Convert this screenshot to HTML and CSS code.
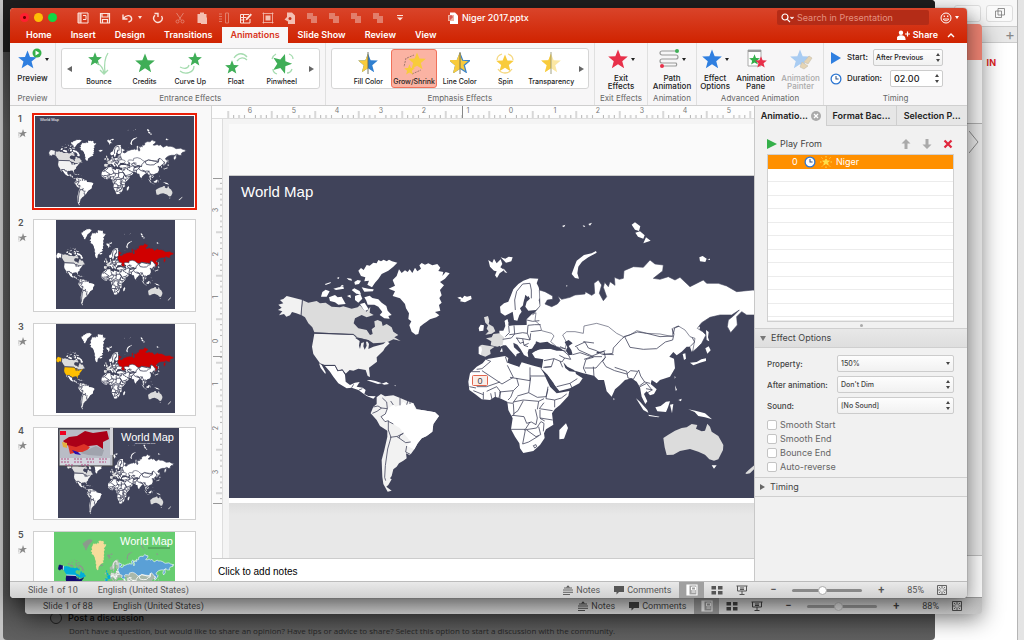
FILE: index.html
```html
<!DOCTYPE html>
<html lang="en">
<head>
<meta charset="utf-8">
<title>Niger 2017.pptx</title>
<link rel="stylesheet" href="styles.css">
</head>
<body>
<svg class="defs" aria-hidden="true">
  <defs>
    <symbol id="star" viewBox="0 0 24 24"><path d="M12 .5l3.200 8.200 8.600.4-6.700 5.500 2.300 8.500L12 18.300 4.600 23.100l2.300-8.500L.2 9.100l8.600-.4z"/></symbol>
    <symbol id="halfstar" viewBox="0 0 24 24"><path d="M12 .5v17.800L4.600 23.100l2.300-8.500L.2 9.100l8.600-.4z"/></symbol>
    <symbol id="ministar" viewBox="0 0 9 9"><path d="M5 0l1 3h3L6.500 4.800l.9 3.200L4.800 6.200 1.800 8.500l1-3.300L1 4l3-.6z"/><path d="M0 4h2M0 6h1.500M.5 8h1" stroke="#999" fill="none" stroke-width=".7"/></symbol>
    <symbol id="clock" viewBox="0 0 14 14"><circle cx="7" cy="7" r="5.700" fill="#fff" stroke="#2d76d2" stroke-width="1.500"/><path d="M7 3.500V7h3" fill="none" stroke="#2a4f85" stroke-width="1.200"/></symbol>
    <symbol id="notes-i" viewBox="0 0 10 10"><path d="M0 5h10M0 7.300h10M0 9.500h7M1 3h8" stroke="currentColor" stroke-width=".9"/><path d="M3 2.500L5 .3l2 2.200z" fill="currentColor"/></symbol>
    <symbol id="comment-i" viewBox="0 0 10 10"><path d="M0 1h10v6H5L2.500 9.600V7H0z" fill="currentColor"/></symbol>
    <symbol id="normal-i" viewBox="0 0 12 12"><path d="M1 1h10v10H1z" fill="none" stroke="currentColor" stroke-width="1.200"/><path d="M1 1h2.500v10H1z" fill="currentColor"/><path d="M5.500 3h4v3h-4zM5.500 8h4" fill="none" stroke="currentColor"/></symbol>
    <symbol id="grid-i" viewBox="0 0 12 12"><path d="M.5 2h4.500v3.500H.5zM7 2h4.500v3.500H7zM.5 7h4.500v3.500H.5zM7 7h4.500v3.500H7z" fill="currentColor"/></symbol>
    <symbol id="show-i" viewBox="0 0 12 12"><path d="M.5 2h11M1.500 2v5h9V2M6 7v3M3.500 10.500h5M4 4h4M4 5.500h4" fill="none" stroke="currentColor"/></symbol>
    <symbol id="fit-i" viewBox="0 0 12 12"><path d="M1.500 1.500h9v9h-9z" fill="none" stroke="currentColor" stroke-width=".9"/><path d="M6 2v2.500M6 7.500V10M2 6h2.500M7.500 6H10M3 3l1.500 1.500M9 3L7.500 4.500M3 9l1.500-1.500M9 9L7.500 7.500" fill="none" stroke="currentColor" stroke-width=".8"/></symbol>
    <symbol id="copy-i" viewBox="0 0 12 12"><path d="M1 1h6v3h4v7H5V7H1z" fill="currentColor"/></symbol>

    <g id="map">
      <g transform="translate(225 200) scale(.33333)">
        <g class="c-arctic">
          <path class="c-gl" d="M491 266L510 257 503 240 515 228 522 208 530 219 540 211 548 216 554 208 562 219 570 203 577 214 588 206 583 196 590 189 600 194 610 190 622 196 637 192 646 203 640 213 655 216 652 228 662 216 674 220 660 236 645 246 657 256 645 270 650 286 643 294 650 308 642 315 646 332 630 336 643 346 634 352 615 358 605 365 595 372 585 380 580 402 572 404 560 395 553 376 559 364 550 357 552 340 543 325 540 312 525 295 503 288 510 274Z"/>
          <path class="c-isl" d="M400 212L408 204 416 210 425 195 434 197 445 188 455 190 460 180 468 184 476 179 485 184 492 179 501 184 517 188 505 200 490 212 470 222 460 237 450 248 441 262 427 254 432 242 418 244 421 232 408 228Z"/>
        </g>
        <path class="c-isl" d="M288 290L292 276 302 269 314 274 305 290ZM312 292L330 285 338 292 350 290 362 312 340 314 330 307 315 303ZM418 292L434 287 442 294 460 298 470 308 484 318 488 332 500 345 490 348 494 356 478 355 464 345 472 336 460 320 448 314 428 314 424 302ZM380 270l8-5 16 8 4 10-14-2zM410 262l20 4 16 2-2 6-26 1zM390 288l16-6 6 14-12 12-10-8zM300 252l18-6-2 4-14 5zM325 266l16-4 14-2 2 6-24 4zM335 234l8-3-2 6zM365 234l14 2 2 6-10-2zM388 246l10-6 10 2-6 10-12 2zM366 288l10-4 2 10zM405 312l14-4 12 20-12 6zM345 262l6-8 6 4z"/>
        <path class="c-isl" d="M697 293L706 290 712 295 718 287 726 290 738 287 740 297 720 307 705 304 708 299Z"/>
        <path class="c-ak" d="M165 300L175 297 185 288 200 292 232 300 228 345 214 340 201 336 195 346 184 350 177 342 162 346 172 334 159 330 170 323 160 314 175 310Z"/>
        <path class="c-ca" d="M233 301L250 308 275 303 285 310 302 308 320 320 345 322 355 319 380 326 398 322 405 316 415 328 425 335 436 320 434 338 446 345 425 352 410 345 390 355 386 370 400 385 425 390 435 405 443 402 440 388 450 380 448 364 458 360 470 365 473 378 485 372 500 382 505 395 520 405 508 412 527 423 505 418 490 425 470 428 445 430 430 420 395 412 385 403 268 397 262 382 250 370 240 352 229 345Z"/>
        <path class="c-us" d="M268 401L385 405 398 417 425 420 432 432 430 447 445 440 475 432 485 423 494 430 480 443 475 452 455 472 456 485 432 503 435 531 428 528 422 510 400 506 385 512 374 510 362 521 352 508 340 512 330 495 300 495 285 490 265 462 261 440Z"/>
        <path class="c-land" d="M300 498L330 498 338 514 352 511 360 524 362 545 375 555 390 548 404 546 395 560 413 563 422 570 418 582 430 588 452 589 445 596 425 588 400 570 380 563 365 565 340 550 325 530 315 515ZM282 490l8 5 12 22-1 5-14-18zM425 541l12-1 14 3 20 7-12 2-18-6zM470 551l14-5 8 6-14 2zM508 556l6 1-4 2z"/>
        <path class="c-sa" d="M455 592L468 582 480 589 505 586 520 592 545 602 565 610 575 628 590 630 630 637 642 648 625 672 622 695 605 708 590 715 578 730 568 748 555 766 543 760 545 775 535 782 522 790 515 800 505 808 500 828 495 835 500 838 490 855 484 860 500 872 488 875 475 852 472 830 470 780 478 750 487 710 487 692 465 678 455 660 437 640 445 620 455 612Z"/>
        <path class="c-land" d="M487 626L505 615 512 620 525 616 535 605 545 614 565 610 570 628 590 630 630 637 642 648 625 672 622 695 605 708 590 715 578 730 568 748 545 738 557 725 545 710 535 700 525 685 505 672 490 662 480 665 468 650 480 642Z"/>
        <path class="c-sea" d="M390 413l22 3 15 4 8 4-12 1 2 12-6 12-4-10 2-12-8 2-4 18-3-10 2-14z"/>
        <path class="c-line" d="M232 300l-4 45M268 399l117 4 10 8M300 496l20 0 10 0 8 16 14-2 10 14M487 626l-18-2-10-6-14 3M487 626l-2-20-13-12M505 615l-8-12M525 616l0-22M545 614l4-12M555 612v-8M442 640l14-6 14-10M487 626l-6 16-13 8 12 15 10-3v28l8 22-10 35-7 50-2 35 3 10M495 712l22-3 18-9M505 672l-15-8M535 700l-10 6-3 8 20 14 15-2M545 738l-3 18 16 8M522 714l-6-4M380 563l6-10M402 570l10-4"/>
      </g>
      <g transform="translate(460 200) scale(.33333)">
        <path class="c-land" d="M120 320L132 310 145 305 152 288 160 268 175 252 190 242 210 235 235 236 230 250 236 262 242 290 236 300 241 318 228 330 205 332 196 320 200 305 210 296 205 288 192 300 190 315 180 325 185 335 178 345 172 362 162 360 158 335 150 340 135 347 122 338Z"/>
        <path class="c-land" d="M118 392L130 392 136 378 134 362 142 358 146 378 162 376 200 375 200 358 216 342 240 330 420 360 600 380 720 380 710 440 695 455 690 440 680 440 665 455 650 466 640 456 628 470 642 476 645 505 630 530 600 540 590 550 575 540 572 552 590 568 582 582 570 586 560 574 552 582 562 604 556 612 545 590 540 562 530 545 515 535 495 540 480 555 465 568 455 590 440 574 432 540 415 540 402 527 370 520 345 512 348 522 368 535 358 550 330 565 298 573 278 548 262 524 245 507 250 478 225 474 216 460 235 448 270 446 290 452 312 452 295 440 272 432 262 425 240 428 228 424 224 445 206 448 203 458 205 472 192 465 182 448 172 434 160 428 162 442 180 458 170 462 168 470 150 450 138 436 130 436 120 440Z"/>
        <path class="c-ru" d="M238 270L255 275 278 288 278 298 262 300 255 312 275 320 292 312 300 302 294 288 305 298 330 292 345 285 375 282 376 275 395 286 404 280 402 250 415 240 425 255 418 280 430 302 440 290 430 262 434 247 445 260 450 245 465 256 463 232 478 238 490 235 492 212 520 200 550 202 570 180 585 192 610 195 608 213 580 235 600 238 625 230 645 240 660 232 690 260 730 240 740 250 775 250 800 258 830 275 880 270 900 282 945 292 925 298 930 308 900 312 885 330 890 345 860 345 845 335 830 350 832 375 812 398 802 380 805 360 820 348 838 330 815 345 780 345 750 352 725 368 712 385 728 395 738 405 725 430 710 445 698 455 705 415 690 410 675 390 655 378 638 385 638 410 600 402 560 400 530 392 510 405 490 410 470 400 445 380 410 370 372 378 370 400 345 395 320 395 308 405 320 428 315 447 290 440 272 425 282 408 275 400 245 392 240 375 225 362 228 338 218 344 240 318Z"/>
        <path class="c-isl" d="M335 222L343 200 350 182 372 165 395 160 408 153 410 158 385 172 366 185 355 200 352 220 357 236 345 234ZM85 180l12 8 5-12 8 14 12-12 5 14-6 10 12 8-14 10-8 14-6-8 5-12-8-2-12-12zM122 172l14 4 10-6 12 2-4 12-16 4zM130 205l12 14-8-2zM306 78l10-4-4 8zM318 86l4-6zM324 76l8 2zM350 72l6 4zM368 76l8 2-4 4zM385 72l11-4-6 9zM505 66l8 4zM515 74l10-7 16 12-4 14-12-4zM526 98l14-4 14 12-4 10-16-6zM550 130l8-18 14 10zM718 172l10-4 12 8-4 10-16-2zM742 178l8-2 0 4zM765 182l10 1zM735 202l8 1zM318 256l5 1-3 3z"/>
        <path class="c-ca" d="M72 352L84 348 88 362 86 372 100 380 106 394 95 401 76 404 86 394 80 386 84 376 76 368Z"/>
        <path class="c-ca" d="M78 415L95 412 100 402 118 400 132 412 128 435 112 440 92 436 94 424ZM58 438L66 434 104 440 90 450 92 462 76 470 60 464Z"/>
        <path class="c-land" d="M56 384l6-10 10 2-2 16-12 2zM56 440l8 0 2 10-4 14-6-2zM134 364l8-6 4 12-8 4zM120 455l6-12 2 12z"/>
        <path class="c-land" d="M68 490L78 478 100 474 135 468 145 474 142 488 170 498 178 500 185 487 215 496 243 503 250 515 258 535 270 560 290 580 328 573 325 588 300 615 285 627 276 640 280 674 258 688 252 700 254 714 240 735 220 753 190 759 180 745 178 730 165 710 153 688 158 655 145 630 142 605 120 595 105 590 90 600 65 598 45 582 28 570 25 545 30 520 50 500Z"/>
        <path class="c-land" d="M298 690L318 670 324 684 312 716 298 718ZM460 594l4 3-3 4zM528 595L540 605 562 630 565 638 550 630ZM586 622L602 618 618 605 630 604 624 622 618 636 592 634ZM565 644l34 6-4 2-28-4zM630 614l10-2-4 28zM685 628L706 632 735 640 756 658 735 652 715 648 704 636ZM645 556l6 14-4 2zM655 600l10-4-2 8zM634 636l3 10zM738 390l8 6-2 16 4 12-8-4zM736 445l10-6 6 12-10 10zM690 488l20-2 14-8 14-3 0 8-18 5-20 8zM668 462l8-2 2 16-6 4zM755 796l15 0-8 10zM644 528l3 4-3 4z"/>
        <path class="c-au" d="M610 714L625 704 645 692 665 684 680 682 695 672 712 675 708 686 725 694 735 692 742 671 750 680 755 695 775 708 790 735 789 750 775 778 762 782 748 778 735 764 715 755 690 747 660 753 640 764 620 765 614 742ZM856 820l10-10 14-12 14-12 6 2-16 18-14 14-10 2z"/>
        <path class="c-sea" d="M216 446L225 432 240 430 256 434 264 428 272 434 290 442 296 450 270 446 240 448 228 452ZM314 426L326 420 338 430 326 438 334 450 338 464 326 466 318 452 322 442ZM310 487L322 500 342 510 348 516 328 514 316 504ZM240 503L262 524 280 548 294 576 284 568 268 544 256 526ZM196 284l6 6-6 20-8 12zM410 455h12l-3 4h-9z"/>
        <path class="c-line" d="M210 250l-22 2-18 22-6 26 2 30M210 250l4 20 0 25M146 378l2 20-12 12M162 376l2 26-16 2M164 402l24-4 14 2 2-24M202 400l8 20-22-4-20-2M204 376l20-2 18 0M200 360l18 4 20-2M212 395l32-4M210 420l2-20M164 402l-10 12-26 4M170 414l10 16 12-4M188 416l4 20 14-6M192 436l12 4M310 452l16 14 6 12-18-4-16-8M314 474l-8 12-24-10-30 6M282 476l-8 24-20 2M274 500l-24 2M300 484l8 18M290 560l40-10 22-14M330 550l6 14M338 464l22-6 40 14-22 6-8 26 8 16M372 478l24-8 30 0M345 440l30-14 10 18 24 8 16 10 36 2M350 440l6 10 40 18M370 425l32 4M396 468l36-14 4 18-28 32-34 0M410 460l26-8M460 444l-2 16-30 4M460 444l26-28 8-6M494 410l16 32 40 6 40-2 26-20 22-6 4-18-6-16M494 410l38-14 28 4 40 10 38-2M640 402l4-18 12-5M436 472l-8 12 10 16 26 12 36 10 12-10 20 2M464 502l36 12M500 514l4 20 16 4 16-28 6 18 12 18-16 12M554 546l16 4M540 560l20-10 16 20-16 10M558 566l20 4M690 440l14-14-8-14M300 440l20 8M300 450l20 4M402 530l-2-30"/>
        <path class="c-line" d="M78 478l14 6-26 22-16 2M60 515h-25M66 512l60 40 34-20-18-36M142 488l-6-18M150 532l60 10 0-40M178 500l-8-6M210 528h48M212 532l-6 46-34 10M170 534l6 22-16 16-42 4M50 560l30 0 40-14M80 574l30-14 12 16-6 20M40 572l30 12M70 576v22M92 580l4 18M105 576l2 20M28 560l20 4M120 576l0 18M160 572l-8 20-8 8M172 590l-14 20-16-2M160 606l30-6 46 4 16-8M206 578l26 14 26-2 6-22M264 560l-6 36 26 4 20-6 16-12M284 600l0 22M236 604l-4 24M252 608l-14 18 40 6M160 610l2 34-10 6M190 602l-16 30-14 10M158 646l34 4 8 20 14-4 14 8 4-20-6-26M240 630l0 24 38 6M152 688h44l14-22M196 690l-8 42 18-6 30-18M192 690l38-6 12-18M200 690l28 20M228 710l14-6-6-24M242 664l10 6-2 24M240 655l14 8M220 737l8-3 2 6-6 4z"/>
      </g>
    </g>
  </defs>
</svg>

<div class="desktop">
  <div class="browser" aria-hidden="true">
    <div class="browser-bar"><span class="browser-btn"></span><span class="browser-btn"><svg width="10" height="10" viewBox="0 0 10 10"><path d="M3 .5h6.500V7H3zM.5 3h6v6.500h-6z" fill="#f8f8f8" stroke="#777" stroke-width=".8"/></svg></span></div>
    <div class="browser-tabs"><span>+</span></div>
    <div class="browser-page"><b>IN</b></div>
  </div>
  <div class="forum">
    <div class="forum-head"></div>
    <div class="forum-foot">
      <label class="forum-option"><input type="radio" name="kind"> Post a discussion</label>
      <p>Don't have a question, but would like to share an opinion? Have tips or advice to share? Select this option to start a discussion with the community.</p>
    </div>
  </div>

  <section class="window window-back" aria-label="Background presentation">
    <div class="back-title"></div>
    <div class="back-ribbon"></div>
    <div class="back-body"><svg width="10" height="24" viewBox="0 0 10 24"><path d="M0 1l9 11-9 11" fill="none" stroke="#888"/></svg></div>
    <div class="back-notes"></div>
    <footer class="status">
      <span>Slide 1 of 88</span><span class="status-lang">English (United States)</span>
      <button class="st-btn"><svg class="i10"><use href="#notes-i"/></svg>Notes</button>
      <button class="st-btn"><svg class="i10"><use href="#comment-i"/></svg>Comments</button>
      <button class="st-view on" aria-label="Normal"><svg class="i12"><use href="#normal-i"/></svg></button>
      <button class="st-view" aria-label="Sorter"><svg class="i12"><use href="#grid-i"/></svg></button>
      <button class="st-view" aria-label="Slide show"><svg class="i12"><use href="#show-i"/></svg></button>
      <button class="st-zoom">−</button><input type="range" min="0" max="100" value="43" aria-label="Zoom"><button class="st-zoom">+</button>
      <span class="st-pct">88%</span>
      <button class="st-fit" aria-label="Fit"><svg class="i12"><use href="#fit-i"/></svg></button>
    </footer>
  </section>

  <main class="window window-main">
    <header class="head">
      <div class="titlebar">
        <div class="lights"><i class="l-red"></i><i class="l-yel"></i><i class="l-grn"></i></div>
        <div class="tools">
          <button aria-label="Layout"><svg class="i12" viewBox="0 0 12 12"><path d="M1 1h10v10H1zM4 1v10M6 3.500h3v4H6" fill="none" stroke="currentColor"/><path d="M1 1h3v10H1z" fill="currentColor" opacity=".6"/></svg></button>
          <button aria-label="Save"><svg class="i12" viewBox="0 0 12 12"><path d="M1.500 1.500h9v9.500h-9zM3 1.500V5h6V1.500M3.500 11V7.500h5V11" fill="none" stroke="currentColor" stroke-width="1.200"/></svg></button>
          <button class="undo" aria-label="Undo"><svg class="i12" viewBox="0 0 12 12"><path d="M2 2.500v4.500h4.500M2.300 6.700C5 3 9.500 2.500 10.500 6c.5 2-1 3.500-3 4" fill="none" stroke="currentColor" stroke-width="1.400"/></svg><i class="caret"></i></button>
          <button aria-label="Redo"><svg class="i12" viewBox="0 0 12 12"><path d="M3 3.200A4.200 4.200 0 1 0 9.500 4M2.500 1.500h3.500v3.500" fill="none" stroke="currentColor" stroke-width="1.400"/></svg></button>
          <button class="dim" aria-label="Cut"><svg class="i12" viewBox="0 0 12 12"><path d="M2.500 1l5 7.500M9.500 1l-5 7.500" stroke="currentColor"/><g fill="none" stroke="currentColor"><circle cx="3.500" cy="9.500" r="1.500"/><circle cx="8.500" cy="9.500" r="1.500"/></g></svg></button>
          <button class="soft" aria-label="Paste"><svg class="i12" viewBox="0 0 12 12"><path d="M1.500 2h2.500V.5h4V2h2.500v3L11 6v6H5v-1H1.500z" fill="currentColor"/></svg></button>
          <button class="dim" aria-label="List"><svg class="i12" viewBox="0 0 12 12"><path d="M1 2h3M1 4.500h3M1 7h3M1 9.500h3" stroke="currentColor"/><path d="M7.500 1h3v10h-3z" fill="none" stroke="currentColor"/></svg></button>
          <button aria-label="Format"><svg class="i12" viewBox="0 0 12 12"><path d="M.5 2.500h8.500M.5 2.500V11h9.500V7M.5 5.500h6M.5 8h4M3.500 2.500V11" fill="none" stroke="currentColor"/><path d="M5.500 8.500l.7-2L10.500 1.500 12 2.700 7.500 7.800z" fill="currentColor"/></svg></button>
          <button class="soft" aria-label="Select"><svg class="i12" viewBox="0 0 12 12"><path d="M.5 1.500h11M.5 10.500h11M1.500 .5v11M10.500 .5v11" fill="none" stroke="currentColor" stroke-width=".8"/><path d="M3.500 3.500h5v5h-5z" fill="currentColor"/></svg></button>
          <button class="soft" aria-label="Insert file"><svg class="i12" viewBox="0 0 12 12"><path d="M3 .5h5L11 3.500V12H4V9.500L.5 7.500 3 5z" fill="currentColor"/><circle cx="6" cy="6.500" r="1.500" fill="#c73018"/></svg></button>
          <button class="dim" aria-label="Crop"><svg class="i12"><use href="#copy-i"/></svg></button>
          <button class="dim" aria-label="Bring forward"><svg class="i12"><use href="#copy-i"/></svg></button>
          <button class="dim" aria-label="Group"><svg class="i12"><use href="#copy-i"/></svg></button>
          <button class="dim" aria-label="Ungroup"><svg class="i12"><use href="#copy-i"/></svg></button>
          <button aria-label="Customize toolbar"><svg class="i12" viewBox="0 0 12 12"><path d="M3 3.500h6" stroke="currentColor"/><path d="M3 5.500h6L6 8.500z" fill="currentColor"/></svg></button>
        </div>
        <h1 class="doc"><svg width="10" height="12" viewBox="0 0 10 12"><path d="M2 .5h5l3 3V12H2z" fill="#fff"/><path d="M0 3h6v6H0z" fill="#f0b0a0"/><path d="M2 8V4h2v2H2" fill="none" stroke="#c33" stroke-width=".9"/></svg>Niger 2017.pptx</h1>
        <div class="title-right">
          <label class="search"><svg width="14" height="10" viewBox="0 0 14 10"><circle cx="4" cy="4" r="3" fill="none" stroke="currentColor" stroke-width="1.200"/><path d="M6.300 6.300L9 9M9.500 4l1.500 1.500L12.500 4" fill="none" stroke="currentColor" stroke-width="1.200"/></svg><input type="search" placeholder="Search in Presentation" aria-label="Search in Presentation"></label>
          <button class="smile" aria-label="Feedback"><svg class="i12" viewBox="0 0 12 12"><circle cx="6" cy="6" r="5" fill="none" stroke="currentColor"/><path d="M3.200 7c1 2.300 4.600 2.300 5.600 0z" fill="none" stroke="currentColor" stroke-width=".9"/><path d="M4.300 3.500v1.500M7.700 3.500v1.500" stroke="currentColor" stroke-width="1.200"/></svg><i class="caret"></i></button>
        </div>
      </div>
      <nav class="tabs">
        <a href="#">Home</a><a href="#">Insert</a><a href="#">Design</a><a href="#">Transitions</a><a href="#" class="on">Animations</a><a href="#">Slide Show</a><a href="#">Review</a><a href="#">View</a>
        <button class="share"><svg width="13" height="10" viewBox="0 0 13 10"><circle cx="4" cy="2.700" r="2.200" fill="currentColor"/><path d="M0 9.500c0-5 8-5 8 0zM8 4h5M10.500 1.500v5" fill="currentColor" stroke="currentColor" stroke-width="1.200" /></svg>Share</button>
        <button class="fold" aria-label="Collapse ribbon"><svg width="8" height="6" viewBox="0 0 8 6"><path d="M1 5l3-3 3 3" fill="none" stroke="currentColor" stroke-width="1.400"/></svg></button>
      </nav>
    </header>

    <div class="ribbon">
      <section class="grp g-preview">
        <div class="grp-body"><button class="big"><span class="ic"><svg width="28" height="22" viewBox="0 0 28 22"><use href="#star" y="2" width="19" height="19" x="1" fill="#2f7fe0"/><circle cx="20" cy="5" r="4.500" fill="#34b04a"/><path d="M18.500 2.500v5l4-2.500z" fill="#fff"/></svg><i class="caret"></i></span>Preview</button></div>
        <h2>Preview</h2>
      </section>
      <section class="grp g-gallery">
        <div class="gallery">
          <button class="arr" aria-label="Previous"><i class="tri-l"></i></button>
          <button class="fx"><svg width="26" height="24" viewBox="0 0 26 24" fill="#3fae57"><use href="#star" x="2" y="0" width="14" height="14"/><path d="M11 11c4 2 6 5 7 10M22 1c-4 6-4 12-3 20M14 18l4 4 4-4" fill="none" stroke="#a6dcb0" stroke-width="1.300"/></svg>Bounce</button>
          <button class="fx"><svg width="26" height="24" viewBox="0 0 26 24" fill="#3fae57"><use href="#star" x="3" y="1" width="20" height="20"/></svg>Credits</button>
          <button class="fx"><svg width="26" height="24" viewBox="0 0 26 24" fill="#3fae57"><use href="#star" x="11" y="0" width="14" height="14"/><path d="M17 14c0 7-9 9-14 5M3 15c4 2 8 2 9-2" fill="none" stroke="#a6dcb0" stroke-width="1.300"/></svg>Curve Up</button>
          <button class="fx"><svg width="26" height="24" viewBox="0 0 26 24" fill="#3fae57"><use href="#star" x="2" y="8" width="14" height="14"/><path d="M11 6c4-6 10-5 13-1M14 9c3-4 7-4 10-1" fill="none" stroke="#a6dcb0" stroke-width="1.300"/></svg>Float</button>
          <button class="fx"><svg width="26" height="24" viewBox="0 0 26 24" fill="#3fae57"><use href="#star" x="3" y="1" width="20" height="20" transform="rotate(18 13 11)"/><path d="M3 7c1-3 2-4 4-5M20 2c3 1 4 3 4 5M23 17c-1 3-3 4-5 4M8 22c-3-1-4-3-4-5" fill="none" stroke="#a6dcb0" stroke-width="1.300"/></svg>Pinwheel</button>
          <button class="arr" aria-label="Next"><i class="tri-r"></i></button>
        </div>
        <h2>Entrance Effects</h2>
      </section>
      <section class="grp g-gallery">
        <div class="gallery emph">
          <button class="fx"><svg width="26" height="24" viewBox="0 0 26 24"><use href="#star" x="3" y="1" width="20" height="20" fill="#2f7fd0"/><use href="#halfstar" x="3" y="1" width="20" height="20" fill="#f8cb3c"/><path d="M13 0v22" stroke="#665" stroke-width=".9"/></svg>Fill Color</button>
          <button class="fx on"><svg width="26" height="24" viewBox="0 0 26 24" fill="#f8cb3c"><path d="M5 6L3 15M11 22l9-4M6 6l7-3" stroke="#8d6a60" stroke-dasharray="2 1" stroke-width=".8"/><use href="#star" x="7" y="0" width="18" height="18"/><use href="#star" x="3" y="12" width="11" height="11"/></svg>Grow/Shrink</button>
          <button class="fx"><svg width="26" height="24" viewBox="0 0 26 24" fill="#f8cb3c"><use href="#star" x="3" y="1" width="20" height="20" stroke="#3d85c8" stroke-width="1.500"/><use href="#halfstar" x="3" y="1" width="20" height="20" stroke="#f8cb3c" stroke-width="1.500"/><path d="M13 0v22" stroke="#665" stroke-width=".9"/></svg>Line Color</button>
          <button class="fx"><svg width="26" height="24" viewBox="0 0 26 24" fill="#f8cb3c"><use href="#star" x="4" y="2" width="18" height="18"/><path d="M5 8c0-3 2-5 5-6M16 2c3 1 5 3 5 6M6 17c2 3 4 4 7 4s5-1 7-4" fill="none" stroke="#f5d880" stroke-width="1.300"/></svg>Spin</button>
          <button class="fx"><svg width="26" height="24" viewBox="0 0 26 24"><use href="#star" x="3" y="1" width="20" height="20" fill="#fbe7a2"/><use href="#halfstar" x="3" y="1" width="20" height="20" fill="#f8cb3c"/><path d="M13 0v22" stroke="#997" stroke-width=".9"/></svg>Transparency</button>
          <button class="arr" aria-label="Next"><i class="tri-r"></i></button>
        </div>
        <h2>Emphasis Effects</h2>
      </section>
      <section class="grp g-exit">
        <div class="grp-body"><button class="big"><span class="ic"><svg width="22" height="22" fill="#e8304a"><use href="#star" x="1" y="1" width="20" height="20"/></svg><i class="caret"></i></span>Exit<br>Effects</button></div>
        <h2>Exit Effects</h2>
      </section>
      <section class="grp g-path">
        <div class="grp-body"><button class="big"><span class="ic"><svg width="22" height="22" viewBox="0 0 22 22"><path d="M18 3H4a2 2 0 0 0 0 4h14a2 2 0 0 1 0 4H4a2 2 0 0 0 0 4h14a2 2 0 0 1 0 3H4" fill="none" stroke="#999" stroke-width="1.200"/><circle cx="19" cy="3" r="2" fill="#3fae57"/><circle cx="4" cy="18" r="2" fill="#e8304a"/></svg><i class="caret"></i></span>Path<br>Animation</button></div>
        <h2>Animation</h2>
      </section>
      <section class="grp g-adv">
        <div class="grp-body">
          <button class="big"><span class="ic"><svg width="22" height="22" fill="#2f7fe0"><use href="#star" x="1" y="1" width="20" height="20"/></svg><i class="caret"></i></span>Effect<br>Options</button>
          <button class="big"><span class="ic"><svg width="22" height="22" viewBox="0 0 22 22"><path d="M3 2h13v16H3z" fill="#fff" stroke="#aaa"/><path d="M3 2h13v2H3z" fill="#999"/><use href="#star" x="4" y="6" width="11" height="11" fill="#34b04a"/><use href="#star" x="10" y="8" width="12" height="12" fill="#e8304a"/></svg></span>Animation<br>Pane</button>
          <button class="big off" disabled><span class="ic"><svg width="24" height="22" viewBox="0 0 24 22"><use href="#star" x="1" y="1" width="20" height="20" fill="#a9ccf2"/><path d="M20 8l3 2-4 6-4-2zM13 14l6 4-4 3-4-2z" fill="#e5d4b4" stroke="#c8c0b0" stroke-width=".6"/></svg></span>Animation<br>Painter</button>
        </div>
        <h2>Advanced Animation</h2>
      </section>
      <section class="grp g-time">
        <div class="time-rows">
          <div><svg width="12" height="12" viewBox="0 0 12 12"><path d="M1 0l10 6-10 6z" fill="#2f7fe0"/></svg>
          <label for="start">Start:</label>
          <span class="sel"><select id="start"><option>After Previous</option></select><i class="updown"></i></span></div>
          <div><svg width="12" height="12"><use href="#clock"/></svg>
          <label for="dur">Duration:</label>
          <span class="spin"><input id="dur" type="text" value="02.00"><i class="updown"></i></span></div>
        </div>
        <h2>Timing</h2>
      </section>
    </div>

    <div class="work">
      <ol class="thumbs">
        <li class="thumb sel-thumb"><div class="no">1<svg><use href="#ministar"/></svg></div>
          <button aria-label="Slide 1"><svg class="pic" viewBox="0 0 161 91" preserveAspectRatio="none"><path class="bg" d="M0 0h161v91H0z"/><text x="5" y="5" font-size="4">World Map</text><svg width="161" height="91" viewBox="229 176 572 322" preserveAspectRatio="none"><use href="#map"/></svg></svg></button></li>
        <li class="thumb tall ru-red"><div class="no">2<svg><use href="#ministar"/></svg></div>
          <button aria-label="Slide 2"><svg class="pic" viewBox="0 0 161 91"><path class="bg" d="M22 0h119v89H22z"/><svg x="22" width="119" height="89" viewBox="278 173 498 333" preserveAspectRatio="none"><use href="#map"/></svg></svg></button></li>
        <li class="thumb tall ru-red us-gold"><div class="no">3<svg><use href="#ministar"/></svg></div>
          <button aria-label="Slide 3"><svg class="pic" viewBox="0 0 161 91"><path class="bg" d="M22 0h119v89H22z"/><svg x="22" width="119" height="89" viewBox="278 173 498 333" preserveAspectRatio="none"><use href="#map"/></svg></svg></button></li>
        <li class="thumb"><div class="no">4<svg><use href="#ministar"/></svg></div>
          <button aria-label="Slide 4"><svg class="pic" viewBox="0 0 161 91"><path class="bg" d="M24 0h121v90H24z"/><svg x="24" width="121" height="90" viewBox="238 158 558 350" preserveAspectRatio="none"><use href="#map"/></svg>
            <text x="87" y="13" font-size="11">World Map</text><text x="101" y="16" font-size="2">Soviet Union and allies</text>
            <path d="M25 1h54v37H25z" fill="#b9bcc6" stroke="#444"/><path d="M76 0h3v27h-3z" fill="#d5d5da"/><path d="M26 3h6v4h-6z" fill="#e02"/>
            <path d="M29 13l6-4 8-1 8-5 8 2 14-2 2 8-6 3v7l-6-4-8 1-10 4-8-2-4-3z" fill="#ab0018"/><path d="M34 17l8 2 8-3 6 3-4 5-8 0-8 2z" fill="#dd3328"/><path d="M28 14l5 1v5l-4-1z" fill="#e4b040"/><path d="M38 22l6 2 3 3-6-1z" fill="#2a10a8"/><path d="M46 25l16-7 8 4-2 6-14-1z" fill="#a0a3ad"/><path d="M26 30h50v7H26z" fill="#d4d6df"/>
            <path d="M27 31h8M40 31h8M52 31h9M65 31h8M27 34h9M40 34h8M53 34h7M65 34h7M31 37h8M47 37h8" stroke="#b05080" stroke-dasharray="2 1"/></svg></button></li>
        <li class="thumb tall green"><div class="no">5<svg><use href="#ministar"/></svg></div>
          <button aria-label="Slide 5"><svg class="pic" viewBox="0 0 161 91"><path class="bg" d="M20 0h121v90H20z"/><svg x="20" width="121" height="90" viewBox="262 181 517 318" preserveAspectRatio="none"><use href="#map"/></svg><text x="86" y="13" font-size="11">World Map</text><path d="M114 16h22" stroke="#4a8a52"/></svg></button></li>
      </ol>

      <section class="editor">
        <div class="ruler-h"><svg width="800" height="12" viewBox="222 106 800 12">
          <defs><pattern id="th" x="511" y="106" width="43.500" height="12" patternUnits="userSpaceOnUse"><path d="M5.400 9v3M10.900 9v3M16.300 9v3M21.750 5v7M27.200 9v3M32.600 9v3M38 9v3" stroke="#aaa" stroke-width=".9"/></pattern></defs>
          <path d="M226 106h796v12H226z" fill="url(#th)"/>
          <g text-anchor="middle"><text x="250" y="113">6</text><text x="294" y="113">5</text><text x="337" y="113">4</text><text x="381" y="113">3</text><text x="424" y="113">2</text><text x="468" y="113">1</text><text x="511" y="113">0</text><text x="555" y="113">1</text><text x="598" y="113">2</text><text x="642" y="113">3</text><text x="685" y="113">4</text><text x="729" y="113">5</text></g>
          <path d="M462.500 106v12" stroke="#888"/></svg></div>
        <div class="stage">
          <div class="ruler-v"><svg width="11" height="440" viewBox="212 118 11 440">
            <defs><pattern id="tv" x="212" y="340" width="11" height="43.500" patternUnits="userSpaceOnUse"><path d="M8 5.400h3M8 10.900h3M8 16.300h3M4 21.750h7M8 27.200h3M8 32.600h3M8 38h3" stroke="#aaa" stroke-width=".9"/></pattern></defs>
            <path d="M212 177h11v326h-11z" fill="url(#tv)"/><path d="M213 177.500h10M213 355.500h10M213 502.500h10" stroke="#999"/>
            <g text-anchor="middle"><text transform="translate(218 209) rotate(-90)">3</text><text transform="translate(218 253) rotate(-90)">2</text><text transform="translate(218 296) rotate(-90)">1</text><text transform="translate(218 340) rotate(-90)">0</text><text transform="translate(218 383) rotate(-90)">1</text><text transform="translate(218 427) rotate(-90)">2</text><text transform="translate(218 471) rotate(-90)">3</text></g></svg></div>
          <div class="canvas">
            <div class="prev-slide"></div>
            <svg class="slide" viewBox="229 176 572 322"><path class="bg" d="M229 176h572v322H229z"/><use href="#map"/><text x="241" y="197" font-size="15">World Map</text>
              <rect x="472.500" y="375.500" width="15" height="10" rx="1" fill="#fbeee8" stroke="#e2674f"/><text x="480" y="384" class="tag">0</text></svg>
            <div class="next-slide"></div>
          </div>
        </div>
        <div class="notes">Click to add notes</div>
      </section>

      <aside class="pane">
        <div class="pane-tabs"><button class="on">Animatio...<span class="x"><svg width="10" height="10" viewBox="0 0 10 10"><path d="M3 3l4 4M7 3L3 7" stroke="#fff" stroke-width="1.300"/></svg></span></button><button>Format Bac...</button><button>Selection P...</button></div>
        <div class="play">
          <button class="play-btn"><svg width="10" height="10" viewBox="0 0 10 10"><path d="M0 0l10 5-10 5z" fill="#34b04a"/></svg>Play From</button>
          <button aria-label="Move up"><svg width="10" height="10" viewBox="0 0 10 10"><path d="M5 0l4.500 4.500H6.500V10h-3V4.500H.5z" fill="#aaa"/></svg></button>
          <button aria-label="Move down"><svg width="10" height="10" viewBox="0 0 10 10"><path d="M5 10L.5 5.500h3V0h3v5.500h3z" fill="#aaa"/></svg></button>
          <button aria-label="Delete"><svg width="10" height="10" viewBox="0 0 10 10"><path d="M1.500 1.500l7 7M8.500 1.500l-7 7" stroke="#e0263c" stroke-width="2.200"/></svg></button>
        </div>
        <ul class="anims"><li class="on"><span>0</span><svg width="12" height="12"><use href="#clock"/></svg><svg width="12" height="12" viewBox="0 0 12 12"><path d="M6 3l1 2h2.300L7.500 6.500l.7 2.300L6 7.500 3.800 8.800l.7-2.300L2.700 5H5zM6 0v1.500M1.500 1.500l1 1M10.500 1.500l-1 1M0 6h1.500M10.500 6H12M2 10.500l1-1M10 10.500l-1-1M6 10.500V12" fill="#ffdf4c" stroke="#ffdf4c"/></svg>Niger</li><li></li><li></li><li></li><li></li><li></li><li></li><li></li><li></li><li></li><li></li><li></li><li></li></ul>
        <div class="grip"><i></i></div>
        <button class="sec open"><i class="tri-d"></i>Effect Options</button>
        <div class="opts">
          <label for="prop">Property:</label><span class="sel"><select id="prop"><option>150%</option></select><i class="caret"></i></span>
          <label for="after">After animation:</label><span class="sel"><select id="after"><option>Don't Dim</option></select><i class="updown"></i></span>
          <label for="sound">Sound:</label><span class="sel"><select id="sound"><option>[No Sound]</option></select><i class="updown"></i></span>
        </div>
        <div class="checks">
          <label><input type="checkbox">Smooth Start</label><label><input type="checkbox">Smooth End</label><label><input type="checkbox">Bounce End</label><label><input type="checkbox">Auto-reverse</label>
        </div>
        <button class="sec"><i class="tri-r"></i>Timing</button>
      </aside>
    </div>

    <footer class="status">
      <span>Slide 1 of 10</span><span class="status-lang">English (United States)</span>
      <button class="st-btn"><svg class="i10"><use href="#notes-i"/></svg>Notes</button>
      <button class="st-btn"><svg class="i10"><use href="#comment-i"/></svg>Comments</button>
      <button class="st-view on" aria-label="Normal"><svg class="i12"><use href="#normal-i"/></svg></button>
      <button class="st-view" aria-label="Sorter"><svg class="i12"><use href="#grid-i"/></svg></button>
      <button class="st-view" aria-label="Slide show"><svg class="i12"><use href="#show-i"/></svg></button>
      <button class="st-zoom">−</button><input type="range" min="0" max="100" value="42" aria-label="Zoom"><button class="st-zoom">+</button>
      <span class="st-pct">85%</span>
      <button class="st-fit" aria-label="Fit"><svg class="i12"><use href="#fit-i"/></svg></button>
    </footer>
  </main>
</div>
</body>
</html>
```
FILE: styles.css
```css
* { box-sizing: border-box; }
body { margin: 0; font: 9px/12px Inter, "Liberation Sans", sans-serif; color: #333; background: #ccc; }
h1, h2, p, ol, ul { margin: 0; padding: 0; font: inherit; list-style: none; }
button, input, select { font: inherit; color: inherit; background: none; border: 0; padding: 0; margin: 0; appearance: none; }
button { display: inline-flex; align-items: center; justify-content: center; }
a { color: inherit; text-decoration: none; }
svg { display: block; flex: none; }
.defs { position: absolute; width: 0; height: 0; }
.i10 { width: 10px; height: 10px; }
.i12 { width: 12px; height: 12px; }
.caret { border: 2px solid transparent; border-top: 3px solid currentColor; border-bottom: 0; flex: none; }
.tri-l { border: 3px solid transparent; border-right: 5px solid #666; border-left: 0; }
.tri-r { border: 3px solid transparent; border-left: 5px solid #666; border-right: 0; }
.tri-d { border: 3px solid transparent; border-top: 5px solid #777; border-bottom: 0; }
.updown { display: flex; flex-direction: column; gap: 3px; }
.updown::before, .updown::after { content: ""; border: 2px solid transparent; }
.updown::before { border-bottom: 3px solid #444; border-top: 0; }
.updown::after { border-top: 3px solid #444; border-bottom: 0; }

/* desktop */
.desktop { position: relative; height: 100vh; min-height: 560px; overflow: hidden; background: linear-gradient(90deg, #c4c4c4, #e4e4e4); }
.browser { position: absolute; inset: 0 6px 0 50%; background: #fff; border-right: 1px solid #b5b5b5; display: flex; flex-direction: column; }
.browser-bar { height: 27px; background: #f7f7f7; display: flex; justify-content: flex-end; align-items: center; gap: 5px; padding-right: 4px; border-bottom: 1px solid #ccc; }
.browser-btn { width: 27px; height: 17px; border: 1px solid #ddd; border-radius: 3px; display: flex; align-items: center; justify-content: center; background: #fafafa; }
.browser-tabs { height: 16px; background: #e8e8e8; text-align: right; font-size: 15px; line-height: 15px; color: #888; padding-right: 2px; border-bottom: 1px solid #ccc; }
.browser-page { display: flex; justify-content: flex-end; padding: 14px 21px 0 0; color: #e01f1f; }
.forum { position: absolute; inset: 0 89px 0 3px; border-radius: 0 4px 4px 4px; background: linear-gradient(#3a3a3a, #5c5c5c 20%, #505050 93%, #606060); display: flex; flex-direction: column; justify-content: space-between; overflow: hidden; }
.forum-head { height: 52px; background: #1e1e1e; }
.forum-foot { padding: 0 0 3px 47px; color: #262626; }
.forum-option { display: flex; align-items: center; gap: 6px; color: #111; font-size: 9px; font-weight: 600; }
.forum-option input { width: 12px; height: 12px; border: 1px solid #222; border-radius: 50%; }
.forum-foot p { padding-left: 19px; white-space: nowrap; font: 8px/13px "Open Sans", sans-serif; }

/* windows */
.window { position: absolute; display: flex; flex-direction: column; border-radius: 4px; overflow: hidden; }
.window-main { inset: 8px 57px 42px 10px; background: #f7f6f7; box-shadow: 0 6px 20px rgba(0, 0, 0, .5), 0 0 1px #333; }
.window-back { inset: 24px 42px 26px 25px; background: #d0d0d0; box-shadow: 0 6px 22px rgba(0, 0, 0, .45); }
.back-title { height: 36px; background: #e88070; }
.back-ribbon { height: 64px; background: #ececec; border-bottom: 1px solid #aaa; }
.back-body { flex: 1; display: flex; align-items: flex-start; justify-content: flex-end; padding: 6px 3px; background: #e4e4e4; }
.back-notes { height: 42px; background: #f8f8f8; border-top: 1px solid #bbb; }
.window-back .status { background: linear-gradient(#bbb, #c8c8c8); color: #3c3c3c; border-color: #999; }
.window-back .st-view.on { background: #8c8c8c; color: #ddd; }
.window-back .status input::-webkit-slider-thumb { background: #ccc; }

/* red header */
.head { color: #fff; background: linear-gradient(#d9442a, #d02300); height: 35px; flex: none; display: flex; flex-direction: column; }
.titlebar { height: 19px; display: flex; align-items: center; padding: 0 8px 0 10px; justify-content: space-between; }
.lights { display: flex; gap: 5px; width: 57px; }
.lights i { width: 9px; height: 9px; border-radius: 50%; }
.l-red { background: radial-gradient(circle, #700 1px, #ff1f30 2px); }
.l-yel { background: #ffbd05; }
.l-grn { background: #12d845; }
.tools { display: flex; gap: 10px; color: #fbe3dc; }
.tools .undo { gap: 5px; }
.soft { color: #f4bfb2; }
.dim { color: #e27e6b; }
.doc { flex: 1; display: flex; align-items: center; gap: 4px; padding-left: 42px; font-size: 9px; font-weight: 500; }
.title-right { display: flex; align-items: center; gap: 11px; }
.search { display: flex; align-items: center; gap: 2px; width: 152px; height: 15px; padding: 0 4px; background: #b42c17; border-radius: 2px; }
.search input { flex: 1; min-width: 0; font-size: 9px; }
.search input::placeholder { color: #e4907f; }
.smile { gap: 3px; }
.tabs { flex: 1; display: flex; padding-left: 7px; font-weight: 600; font-size: 9px; line-height: 16px; }
.tabs a { padding: 0 10px 0 9px; }
.tabs a.on { background: #f8f7f7; color: #d8351b; padding: 0 8px; margin-right: 1px; }
.share { margin-left: auto; gap: 3px; font-weight: 600; }
.fold { padding: 0 12px 0 9px; }

/* ribbon */
.ribbon { display: flex; height: 63px; flex: none; border-bottom: 1px solid #cfcfcf; background: #f7f6f7; font-size: 8px; line-height: 9px; color: #222; }
.grp { display: flex; flex-direction: column; justify-content: space-between; padding: 5px 0 1px; border-right: 1px solid #e0e0e0; }
.grp:last-child { border: 0; }
.grp h2 { text-align: center; color: #666; line-height: 11px; }
.grp-body { display: flex; justify-content: space-around; }
.g-preview { width: 46px; }
.g-gallery { flex: 1; padding-left: 5px; padding-right: 5px; }
.g-exit { width: 53px; }
.g-path { width: 49px; }
.g-adv { width: 127px; }
.g-time { width: 143px; }
.big { flex-direction: column; line-height: 8px; font-weight: 500; }
.big .ic { display: flex; align-items: center; gap: 2px; height: 22px; margin-bottom: 4px; }
.g-preview .big .ic { gap: 0; }
.off { color: #aaa; }
.gallery { display: flex; height: 41px; border: 1px solid #d5d5d5; border-radius: 3px; background: #fff; }
.arr { width: 14px; flex: none; }
.fx { flex: 1 1 0; min-width: 0; flex-direction: column; gap: 1px; font-size: 7px; font-weight: 500; white-space: nowrap; border: 1px solid transparent; border-radius: 3px; }
.emph { padding-left: 14px; }
.fx.on { background: #fbb3a3; border-color: #f0715a; }
.time-rows { display: flex; flex-direction: column; gap: 4px; padding: 1px 24px 0 6px; }
.time-rows div { display: flex; align-items: center; gap: 5px; font-weight: 500; }
.sel, .spin { display: flex; align-items: center; height: 17px; border: 1px solid #ccc; border-radius: 2px; background: linear-gradient(#fdfdfd, #f1f1f1); padding: 0 3px; }
.sel select { flex: 1; min-width: 0; outline: 0; font-weight: 500; }
.time-rows .sel { width: 70px; margin-left: auto; padding: 0 2px; }
.time-rows .sel select { font-size: 7px; }
.spin { width: 53px; background: #fff; margin-left: auto; font-size: 9px; }
.spin input { flex: 1; width: 20px; }

/* work area */
.work { flex: 1; min-height: 0; display: flex; }
.thumbs { width: 202px; flex: none; padding: 7px 14px 0 5px; border-right: 1px solid #d4d4d4; background: #f9f9f9; overflow: hidden; display: flex; flex-direction: column; gap: 7px; }
.thumb { display: flex; flex: none; height: 97px; --ru: #fff; --us: #f2f2f2; --ca: #dcdcdc; --ak: #f2f2f2; --gl: #fff; --land: #fff; --isl: #fff; --sea: #40435a; }
.no { width: 17px; padding-left: 3px; font-weight: 600; color: #555; }
.no svg { width: 9px; height: 9px; margin-top: 4px; fill: #888; }
.thumb button { flex: 1; margin: 2px 1px; border: 1px solid #d0d0d0; background: #fff; }
.sel-thumb button { margin: 0; border: 2px solid #ea1f08; padding: 1px; }
.pic { width: 100%; height: 100%; }
.pic text { fill: #fff; font-family: "Liberation Sans", sans-serif; }
.bg { fill: var(--sea, #40435a); }
.thumb.ru-red { --ru: #d00000; --us: #fff; --ak: #fff; }
.thumb.us-gold { --us: #ffbf00; --ak: #ffbf00; }
.thumb.green { --sea: #66cd70; --ru: #5aa0d6; --us: #120a70; --ak: #120a70; --ca: #00add8; --gl: #f6dc9b; --isl: #8b9a8c; --land: #a9b8aa; --border: #fff; }
.c-arctic { transform: var(--arctic, none); }
.tall { --arctic: translate(34px, -246px) scale(1.11, 1.47); }
.c-land { fill: var(--land, #fff); }
.c-isl { fill: var(--isl, #fff); }
.c-gl { fill: var(--gl, #fff); }
.c-ru { fill: var(--ru, #fff); stroke: var(--border, #40435a); stroke-width: .6px; vector-effect: non-scaling-stroke; }
.c-ca, .c-au { fill: var(--ca, #dcdcdc); }
.c-us { fill: var(--us, #f2f2f2); }
.c-ak { fill: var(--ak, #f2f2f2); }
.c-sa { fill: #f2f2f2; }
.c-sea { fill: var(--sea, #40435a); }
.c-line { fill: none; stroke: var(--border, #40435a); stroke-width: .8px; vector-effect: non-scaling-stroke; }

.editor { flex: 1; min-width: 0; display: flex; flex-direction: column; }
.ruler-h { height: 13px; flex: none; overflow: hidden; background: #fdfdfd; border-bottom: 1px solid #ddd; padding-left: 10px; }
.ruler-h text, .ruler-v text { font: 7px Inter, sans-serif; fill: #777; }
.stage { flex: 1; min-height: 0; display: flex; }
.ruler-v { width: 11px; flex: none; overflow: hidden; background: #fbfbfb; border-right: 1px solid #ddd; }
.canvas { flex: 1; min-width: 0; overflow: hidden; display: flex; flex-direction: column; padding: 5px 0 0 6px; background: #f4f4f4; }
.prev-slide { height: 52px; flex: none; background: #fafafa; border-bottom: 1px solid #ccc; }
.slide { width: 572px; height: 322px; }
.slide text { fill: #fff; font-family: "Liberation Sans", sans-serif; }
.slide .tag { fill: #444; font-size: 9px; text-anchor: middle; }
.next-slide { flex: 1; margin-top: 5px; background: linear-gradient(#dedede, #e8e8e8 12px); outline: 5px solid #fff; clip-path: inset(-5px 0 0 0); }
.notes { height: 23px; flex: none; padding: 7px 6px; background: #fff; border-top: 1px solid #ccc; font: 10px/12px "Liberation Sans", sans-serif; color: #000; }

/* animation pane */
.pane { width: 213px; flex: none; border-left: 1px solid #c8c8c8; background: #f1f1f1; display: flex; flex-direction: column; font-size: 9px; color: #444; }
.pane-tabs { display: flex; height: 20px; flex: none; font-weight: 600; color: #222; }
.pane-tabs button { flex: 1; white-space: nowrap; background: #e6e6e6; border: solid #cfcfcf; border-width: 0 0 1px 1px; }
.pane-tabs .on { background: #f1f1f1; border-color: transparent; gap: 3px; }
.x { width: 10px; height: 10px; border-radius: 50%; background: #aaa; }
.play { display: flex; align-items: center; gap: 11px; padding: 12px 14px 4px 12px; }
.play-btn { gap: 3px; margin-right: auto; }
.anims { height: 168px; flex: none; margin: 0 13px 0 12px; border: 1px solid #d0d0d0; background: #fff; display: grid; grid-template-rows: repeat(12, 1fr) 4px; }
.anims li { border-bottom: 1px solid #ececec; }
.anims .on { display: flex; align-items: center; gap: 4px; padding-left: 24px; background: #ff9000; color: #fff; border: 0; }
.anims span { width: 8px; }
.grip { height: 6px; display: flex; justify-content: center; align-items: center; }
.grip i { width: 3px; height: 3px; border-radius: 50%; background: #aaa; }
.sec { justify-content: flex-start; gap: 5px; height: 20px; flex: none; padding: 0 5px; border: solid #cfcfcf; border-width: 1px 0; background: #efefef; }
.open { background: linear-gradient(#e8e8e8, #dedede); }
.opts { display: grid; grid-template-columns: 66px 1fr; gap: 4px; align-items: center; padding: 7px 13px 5px 12px; font-size: 8px; font-weight: 500; white-space: nowrap; }
.opts .sel select { font-size: 7px; }
.checks { display: flex; flex-direction: column; gap: 2px; padding: 0 12px 4px; color: #666; font-size: 9px; }
.checks label { display: flex; align-items: center; gap: 3px; }
.checks input { width: 10px; height: 10px; border: 1px solid #c4c4c4; border-radius: 2px; background: #fff; }

/* status bar */
.status { height: 17px; flex: none; display: flex; align-items: center; padding: 0 19px 0 18px; border-top: 1px solid #bbb; background: linear-gradient(#e9e9e9, #d0d0d0); color: #555; font: 9px/12px Roboto, Inter, sans-serif; }
.status-lang { margin: 0 auto 0 20px; }
.st-btn { gap: 3px; margin-right: 14px; }
.st-btn + .st-btn { margin-right: 8px; }
.st-view { width: 25px; height: 100%; }
.st-view.on { background: #a0a0a0; color: #fff; }
.st-zoom { width: 14px; margin-left: 12px; font-size: 11px; font-weight: 600; }
.status input { width: 70px; height: 10px; margin: 0 0 0 12px; }
.status input::-webkit-slider-runnable-track { height: 3px; border-radius: 2px; background: #888; }
.status input::-webkit-slider-thumb { appearance: none; width: 9px; height: 9px; margin-top: -3px; border-radius: 50%; background: #fff; border: 1px solid #aaa; }
.st-pct { margin: 0 12px 0 19px; }
```
